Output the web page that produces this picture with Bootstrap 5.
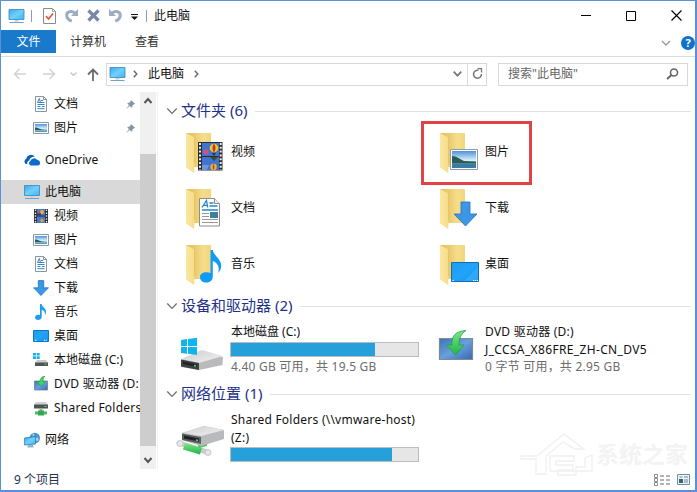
<!DOCTYPE html>
<html lang="zh-CN">
<head>
<meta charset="utf-8">
<meta name="viewport" content="width=device-width, initial-scale=1">
<title>此电脑</title>
<link href="https://cdn.jsdelivr.net/npm/bootstrap@5.3.0/dist/css/bootstrap.min.css" rel="stylesheet">
<style>
body{font-family:"Noto Sans","Noto Sans CJK SC",sans-serif;font-size:12px;line-height:17.5px;color:#111;background:#fff}
svg{display:block;flex-shrink:0}
.win{width:697px;height:492px;border:1px solid #5a90d8;border-width:1px 2px 2px 1px}
.titlebar{height:29px;padding-left:7px}
.ml-2x{margin-left:2px}.ml-5x{margin-left:5px}.ml-6x{margin-left:6px}.ml-7x{margin-left:7px}.ml-9x{margin-left:9px}
.ml-10x{margin-left:10px}.ml-11x{margin-left:11px}.ml-13x{margin-left:13px}.ml-14x{margin-left:14px}.ml-16x{margin-left:16px}
.ml-29x{margin-left:29px}.ml-34x{margin-left:34px}
.qat-drop{margin:4px 0 0 9px}
.btn-x{margin:0 13px 0 35px}
.help{margin:6px 0 0 10px}
.refresh{margin:0 3px 0 4px}
.tabs{height:27px;border-bottom:1px solid #dcdcdc}
.tab-file{width:55px;height:23px;background:#1979ca;color:#fff;line-height:23px}
.tab-item{line-height:23px;color:#333}
.addr{height:34px;padding-left:12px}
.box{height:23px;border:1px solid #d9d9d9}
.addr-box{width:381px}
.search-box{width:190px;margin-left:11px;color:#666;padding:0 8px 0 9px}
.work{padding-top:1px;height:378px}
.side{width:139px}
.side-row{height:24px;padding-left:32px;gap:5px}
.side-row.top-level{padding-left:23px}
.side-row.sel{background:#d9d9d9}
.scroller{width:16px;background:#f0f0f0;height:377px}
.thumb{background:#cdcdcd}
.split{width:2px;margin-left:1px;border-left:1px solid #f2f2f2}
.content{padding:9px 4px 0 7px;min-width:0}
.group-head{height:20px;font-size:15px;color:#1e3287;gap:3px}
.group-line{height:1px;background:#e2e2e2;margin-left:5px}
.folders{padding-top:3px;padding-bottom:4px}
.drives{height:68px;padding-top:7px}
.tile{width:254px;padding-left:14px;gap:3px}
.tile-folder{height:56px;padding-top:4px}
.tile-folder span{padding-top:15px}
.drop-5{margin-top:5px}.drop-7{margin-top:7px}
.spaced{letter-spacing:.24px}.spaced-more{letter-spacing:.35px}
.hl{left:1px;top:-3px;width:111px;height:64px;border:3px solid #e04343}
.meter{width:189px;height:15px;border:1px solid #bcbcbc;background:#e6e6e6;border-radius:0;margin:1px 0 1px -1px}
.meter .progress-bar{background:#26a0da}
.sub{color:#6d6d6d;letter-spacing:.22px}
.status{height:21px;padding-left:13px;color:#1f3350}
.view-tiles{margin:0 5px 0 7px}
.wm{right:3px;bottom:6px;pointer-events:none}
.wm text{font-family:"Noto Sans CJK SC",sans-serif;font-weight:700}
</style>
</head>
<body>
<svg width="0" height="0" class="position-absolute">
<defs>
<linearGradient id="gS" x1="0" y1="0" x2="1" y2="1"><stop offset="0" stop-color="#3aa7ee"/><stop offset=".5" stop-color="#6fd0fb"/><stop offset="1" stop-color="#45b4f4"/></linearGradient>
<linearGradient id="gF" x1="0" y1="0" x2="1" y2="0"><stop offset="0" stop-color="#fbe7a0"/><stop offset="1" stop-color="#f6dc88"/></linearGradient>
<linearGradient id="gB" x1="0" y1="0" x2="1" y2="0"><stop offset="0" stop-color="#e3bd5c"/><stop offset=".35" stop-color="#ecca6c"/><stop offset=".7" stop-color="#f6dd8b"/><stop offset="1" stop-color="#f1d67c"/></linearGradient>
<linearGradient id="gSky" x1="0" y1="0" x2="0" y2="1"><stop offset="0" stop-color="#4e93dc"/><stop offset=".55" stop-color="#d9effa"/><stop offset="1" stop-color="#3f88b8"/></linearGradient>
<linearGradient id="gD" x1="0" y1="0" x2="1" y2="1"><stop offset="0" stop-color="#1c9cf2"/><stop offset=".5" stop-color="#22a4fa"/><stop offset="1" stop-color="#0f90ec"/></linearGradient>
<linearGradient id="gV" x1="0" y1="0" x2="1" y2="1"><stop offset="0" stop-color="#3c73b8"/><stop offset=".5" stop-color="#6a9fdc"/><stop offset="1" stop-color="#3568b0"/></linearGradient>
<linearGradient id="gT" x1="0" y1="0" x2="1" y2="1"><stop offset="0" stop-color="#cfcfd1"/><stop offset="1" stop-color="#f0f0f1"/></linearGradient>
<linearGradient id="gG" x1="0" y1="0" x2="0" y2="1"><stop offset="0" stop-color="#7fe58a"/><stop offset="1" stop-color="#1fb544"/></linearGradient>
<symbol id="pc" viewBox="0 0 16 16"><path d="M.5 1.500h15v10H.5z" fill="url(#gS)" stroke="#3b86b8" stroke-width=".8"/><path d="M6 12h4v1.600H6z" fill="#b9d3e3"/><path d="M1 14.500h14" stroke="#6da4c6"/></symbol>
<symbol id="doc" viewBox="0 0 16 16"><path d="M2.500.5h8l3 3v12h-11z" fill="#fff" stroke="#8d969c"/><path d="M10.500.5v3h3" fill="none" stroke="#8d969c"/><path d="M4.500 6.500 6.300 2.500 7.500 6.500M8 4.500h2M4.500 6.500h7M4.500 8.500h7M4.500 10.500h3M9 10.500h2.500M4.500 12.700h7" fill="none" stroke="#2e86c4"/></symbol>
<symbol id="pic" viewBox="0 0 16 16"><path d="M.5 2.500h15v11H.5z" fill="#fff" stroke="#8c98a3"/><path d="M2 4h12v8H2z" fill="url(#gSky)"/><path d="M2 7.500c3 0 4 1.500 8 2.200l4 .3H2z" fill="#2f5d52"/></symbol>
<symbol id="film" viewBox="0 0 16 16"><path d="M1 1h14v14H1z" fill="#2a2a2e"/><path d="M4 1h8v6.500H4zM4 8.500h8V15H4z" fill="#4a7ad0"/><path d="M2.500 1.500v13M13.500 1.500v13" stroke="#e8e8e8" stroke-width="1.400" stroke-dasharray="1.500 1.400"/><circle cx="9" cy="4" r="1.900" fill="#e8b62a"/><path d="M4 5.500h4v2H4z" fill="#333a68"/><circle cx="6" cy="4" r="1" fill="#d8465f"/><circle cx="9" cy="12.500" r="1.700" fill="#d9a32d"/></symbol>
<symbol id="down" viewBox="0 0 16 16"><path d="M5.300.6h5.400v7.200h4.700L8 15.500.6 7.800h4.700z" fill="#3c97e6" stroke="#2472be" stroke-width=".8"/></symbol>
<symbol id="note" viewBox="0 0 16 16"><path d="M7 0h1.500c.5 3 4.700 4 4.500 8-.1 1.500-.6 2.500-1.200 3 .7-3-1-4.800-3.100-5.300v7c0 4-6.700 4.300-6.700.9C2 11 5 10.300 7 11.200z" fill="#1a9cf0"/></symbol>
<symbol id="desk" viewBox="0 0 16 16"><path d="M.5 2.500h15v11H.5z" fill="url(#gD)" stroke="#0c78c4"/><path d="M2 12.300h2M11 12.300h3" stroke="#fff" stroke-dasharray="1 .6"/></symbol>
<symbol id="disk" viewBox="0 0 16 16"><path d="M0 1h3v2.600H0zM3.700 1h3v2.600h-3zM0 4.300h3v2.600H0zM3.700 4.300h3v2.600h-3z" fill="#13b3ea"/><path d="M4 8h9l2 3H2z" fill="#c9c9c9"/><path d="M2 10.500h13v3.500H2z" fill="#505356"/><path d="M11.500 12.200h2" stroke="#4be05c"/></symbol>
<symbol id="dvd" viewBox="0 0 16 16"><path d="M1.500 5h13v9h-13z" fill="url(#gV)" stroke="#6784a5" stroke-width=".8"/><path d="M12 0C9 .4 7 2.500 7 5.500H4l4.500 5 4-5H10C10 3 10.600 1.200 12 0z" fill="#3fd264" stroke="#1c9a3c" stroke-width=".6"/></symbol>
<symbol id="nd" viewBox="0 0 16 16"><path d="M3 2h10l2 3H1z" fill="#d0d0d0"/><path d="M1 4.500h14v4H1z" fill="#4f5254"/><path d="M11.500 6.500h2" stroke="#4be05c"/><path d="M6.500 8.500h3v3h-3z" fill="#8fb59a"/><path d="M2 11.500h12v3H2z" fill="#4fbb62"/><path d="M5 10.500h6v5H5z" fill="#35a74c"/></symbol>
<symbol id="net" viewBox="0 0 16 16"><circle cx="10.800" cy="5.500" r="5.200" fill="#4a92c8"/><path d="M8 2c2-1.500 3 0 2 1.500s1 2 3 1.500 2 3 0 4" fill="#a8d6ee"/><path d="M.6 5.500 11.500 4v7.500L.6 12.500z" fill="url(#gS)" stroke="#2d79b4" stroke-width=".8"/><path d="M4.500 12.500h4v1.500h-4zM3 14.500h7" fill="#9db" stroke="#76a2bf" stroke-width=".7"/></symbol>
<symbol id="cloud" viewBox="0 0 16 16"><path d="M1.700 11.500A3 3 0 0 1 2.300 6.300 4.700 4.700 0 0 1 10.700 4.300C7.500 4 5.600 6 5.300 8 3.400 8.200 3 10 3.400 11.500z" fill="#0a5fb8"/><path d="M6.700 13A2.300 2.300 0 0 1 6.200 8.800 4 4 0 0 1 13.300 7.500 2.800 2.800 0 0 1 14 13z" fill="#0d6cc9"/></symbol>
<symbol id="pin" viewBox="0 0 12 12"><path d="M6.500 1 11 5.200 9.800 5.700 8 7.300 7.700 9.800 5.200 7.600 1 11.200 4.300 6.700 2.300 4.300 4.800 4 6.300 2.300z" fill="#8797a6"/></symbol>
<symbol id="chev" viewBox="0 0 12 12"><path d="M1.300 3.500 6 8.300 10.700 3.500" fill="none" stroke="#6e6e6e" stroke-width="1.200"/></symbol>
<symbol id="fold" viewBox="0 0 48 48"><path d="M6 5h25v34H12z" fill="url(#gB)"/><path d="M6 5 14.500 9.500V36l-.3 9L6 39.500z" fill="url(#gF)"/><path d="M14.500 9.500V36" stroke="#e0bd63" stroke-width=".7"/></symbol>
</defs>
</svg>

<div class="win d-flex flex-column position-relative overflow-hidden">
  <header class="titlebar flex-shrink-0 d-flex align-items-center">
    <svg width="17" height="16"><use href="#pc"/></svg>
    <svg width="1" height="12" class="ml-6x"><path d="M.5 0v12" stroke="#999"/></svg>
    <svg width="13" height="16" class="ml-11x"><path d="M.5.5h9l3 3v12H.5z" fill="#fff" stroke="#8a8a8a"/><path d="M9.500.5v3h3" fill="none" stroke="#aaa"/><path d="m3 8 2.500 3L10 5.500" fill="none" stroke="#e2553c" stroke-width="1.700"/></svg>
    <svg width="14" height="14" viewBox="0 0 14 14" class="ml-9x"><path d="M10 4C5.500.8 1.300 3.500 1.800 7c.3 2.500 2.400 4.200 5 5.200" fill="none" stroke="#9dabc3" stroke-width="3"/><path d="M13 0v7H6z" fill="#9dabc3"/></svg>
    <svg width="13" height="13" class="ms-2"><path d="m1.500 1.500 10 10m0-10-10 10" stroke="#7787a5" stroke-width="3.300"/></svg>
    <svg width="14" height="14" viewBox="0 0 14 14" class="ms-2"><path d="M4 4c4.500-3.200 8.700-.5 8.200 3-.3 2.500-2.400 4.200-5 5.200" fill="none" stroke="#9dabc3" stroke-width="3"/><path d="M1 0v7h7z" fill="#9dabc3"/></svg>
    <svg width="7" height="7" class="qat-drop"><path d="M0 .5h7" stroke="#111"/><path d="M0 2.500h7L3.500 6z" fill="#111"/></svg>
    <svg width="1" height="12" class="ms-2"><path d="M.5 0v12" stroke="#999"/></svg>
    <span class="ml-7x">此电脑</span>
    <svg width="11" height="11" class="ms-auto"><path d="M0 5.500h10" stroke="#000"/></svg>
    <svg width="10" height="10" class="ml-34x"><path d="M.5.5h9v9h-9z" fill="none" stroke="#000"/></svg>
    <svg width="11" height="11" class="btn-x"><path d="m.5.5 10 10m0-10-10 10" stroke="#000" stroke-width="1.100"/></svg>
  </header>

  <nav class="tabs flex-shrink-0 d-flex align-items-start">
    <div class="tab-file text-center">文件</div>
    <div class="tab-item ml-14x">计算机</div>
    <div class="tab-item ml-29x">查看</div>
    <svg width="10" height="23" viewBox="0 0 10 23" class="ms-auto"><path d="M1 11l4 4 4-4" fill="none" stroke="#999" stroke-width="1.300"/></svg>
    <svg width="14" height="14" viewBox="0 0 14 14" class="help"><circle cx="7" cy="7" r="7" fill="#1173c6"/><text x="7" y="11" text-anchor="middle" font-size="11" font-weight="700" fill="#fff">?</text></svg>
  </nav>

  <div class="addr flex-shrink-0 d-flex align-items-center">
    <svg width="14" height="12"><path d="M13 6H1.500m5-5-5 5 5 5" fill="none" stroke="#d2d2d2" stroke-width="1.500"/></svg>
    <svg width="14" height="12" class="ml-16x"><path d="M0 6h11.500m-5-5 5 5-5 5" fill="none" stroke="#d2d2d2" stroke-width="1.500"/></svg>
    <svg width="7" height="5" class="ml-13x"><path d="m.5.5 3 3 3-3" fill="none" stroke="#c4c4c4" stroke-width="1.200"/></svg>
    <svg width="12" height="13" class="ml-10x"><path d="M6 13V1.500m-5 5 5-5 5 5" fill="none" stroke="#6b6b6b" stroke-width="1.800"/></svg>
    <div class="box addr-box d-flex align-items-center ml-7x">
      <svg width="17" height="16" class="ml-2x"><use href="#pc"/></svg>
      <svg width="5" height="8" class="ml-7x"><path d="m.8.8 3 3.200-3 3.200" fill="none" stroke="#666" stroke-width="1.400"/></svg>
      <span class="ml-10x">此电脑</span>
      <svg width="5" height="8" class="ml-10x"><path d="m.8.8 3 3.200-3 3.200" fill="none" stroke="#666" stroke-width="1.400"/></svg>
      <svg width="9" height="6" class="ms-auto"><path d="m.7.7 3.800 4 3.800-4" fill="none" stroke="#777" stroke-width="1.700"/></svg>
      <svg width="1" height="21" class="ml-5x"><path d="M.5 0v21" stroke="#d9d9d9"/></svg>
      <svg width="11" height="12" viewBox="0 0 11 12" class="refresh"><path d="M6.500 2.300A4 4 0 1 0 9.500 6" fill="none" stroke="#777" stroke-width="1.500"/><path d="M5.500.5H9.500V4.500" fill="none" stroke="#777" stroke-width="1.300"/></svg>
    </div>
    <div class="box search-box d-flex align-items-center justify-content-between">
      <span>搜索"此电脑"</span>
      <svg width="13" height="12"><circle cx="8" cy="4.500" r="3.500" fill="none" stroke="#666" stroke-width="1.600"/><path d="M5.500 7 1 11" stroke="#666" stroke-width="2"/></svg>
    </div>
  </div>

  <div class="work flex-shrink-0 d-flex">
    <aside class="side flex-shrink-0 text-nowrap overflow-hidden">
      <div class="side-row d-flex align-items-center"><svg width="16" height="16"><use href="#doc"/></svg>文档<svg width="11" height="11" class="ms-auto me-1"><use href="#pin"/></svg></div>
      <div class="side-row d-flex align-items-center"><svg width="16" height="16"><use href="#pic"/></svg>图片<svg width="11" height="11" class="ms-auto me-1"><use href="#pin"/></svg></div>
      <div class="side-row top-level d-flex align-items-center my-2"><svg width="16" height="17"><use href="#cloud"/></svg>OneDrive</div>
      <div class="side-row top-level sel d-flex align-items-center"><svg width="16" height="16"><use href="#pc"/></svg>此电脑</div>
      <div class="side-row d-flex align-items-center"><svg width="16" height="16"><use href="#film"/></svg>视频</div>
      <div class="side-row d-flex align-items-center"><svg width="16" height="16"><use href="#pic"/></svg>图片</div>
      <div class="side-row d-flex align-items-center"><svg width="16" height="16"><use href="#doc"/></svg>文档</div>
      <div class="side-row d-flex align-items-center"><svg width="16" height="16"><use href="#down"/></svg>下载</div>
      <div class="side-row d-flex align-items-center"><svg width="16" height="16"><use href="#note"/></svg>音乐</div>
      <div class="side-row d-flex align-items-center"><svg width="16" height="16"><use href="#desk"/></svg>桌面</div>
      <div class="side-row d-flex align-items-center"><svg width="16" height="16"><use href="#disk"/></svg>本地磁盘 (C:)</div>
      <div class="side-row d-flex align-items-center"><svg width="16" height="16"><use href="#dvd"/></svg><span class="spaced">DVD 驱动器 (D:</span></div>
      <div class="side-row d-flex align-items-center"><svg width="16" height="16"><use href="#nd"/></svg><span class="spaced">Shared Folders</span></div>
      <div class="side-row top-level d-flex align-items-center mt-2"><svg width="16" height="17"><use href="#net"/></svg>网络</div>
    </aside>
    <div class="scroller flex-shrink-0 d-flex flex-column align-items-center">
      <svg width="16" height="62" viewBox="0 0 16 62"><path d="m4.500 11 3.500-4 3.500 4" fill="none" stroke="#555" stroke-width="2"/></svg>
      <div class="thumb flex-grow-1 w-100"></div>
      <svg width="16" height="23" viewBox="0 0 16 23"><path d="m4.500 12 3.500 4 3.500-4" fill="none" stroke="#555" stroke-width="2"/></svg>
    </div>
    <div class="split flex-shrink-0"></div>
    <main class="content flex-grow-1">
      <div class="group-head d-flex align-items-center"><svg width="12" height="12"><use href="#chev"/></svg><span>文件夹 (6)</span><div class="group-line flex-grow-1"></div></div>
      <div class="folders d-flex flex-wrap">
        <div class="tile tile-folder d-flex"><svg width="48" height="48"><use href="#fold"/><path d="M18 14h24.500v28.500H18z" fill="#2d2d30"/><path d="M22 15h17v13H22zM22 29h17v13H22z" fill="#3f74cf"/><path d="M20 15v27M40.700 15v27" stroke="#eee" stroke-width="2" stroke-dasharray="2 1.800"/><circle cx="34" cy="20" r="4.300" fill="#e9c92f"/><path d="M34 15.700c2 2 2 6.600 0 8.600-2-2-2-6.600 0-8.600z" fill="#c23a24"/><circle cx="26" cy="24" r="2.800" fill="#c9567f"/><path d="m32 25 2 3 2-3z" fill="#4a2a1a"/><path d="M30 29h8l-4 4z" fill="#37502f"/><circle cx="33.500" cy="39" r="3.200" fill="#efb52c"/><path d="M33.500 35.800c1.200 1.500 1.200 5 0 6.300-1.200-1.300-1.200-4.800 0-6.300z" fill="#b9402a"/><path d="M22 37h7l-2 5h-5z" fill="#6f95de"/></svg><span>视频</span></div>
        <div class="tile tile-folder d-flex position-relative"><svg width="48" height="48"><use href="#fold"/><path d="M16.500 21.500h27v20h-27z" fill="#fff" stroke="#8f9cae"/><path d="M18 23h24v17H18z" fill="url(#gSky)"/><path d="M18 28c5 0 8 3.500 12 5l12 .5v2H18z" fill="#2c5e50"/><path d="M18 35.500h24V40H18z" fill="#3a7ca8"/></svg><span>图片</span><div class="hl position-absolute"></div></div>
        <div class="tile tile-folder d-flex"><svg width="48" height="48"><use href="#fold"/><path d="M19.500 14.500h15l5 5v22.500h-20z" fill="#fff" stroke="#8d8d8d"/><path d="M34.500 14.500v5h5" fill="#eee" stroke="#8d8d8d"/><path d="m22 23.500 4.500-7 1.200 7m-4-2.200h3.500M29.500 19h4M29.500 22h8M22 26h16" fill="none" stroke="#2387c8" stroke-width="1.300"/><path d="M22 29.500h7M22 32.500h7M22 35.500h16M22 38.500h16" stroke="#999"/><path d="M30 28h8v6h-8z" fill="#3f7f9e"/></svg><span>文档</span></div>
        <div class="tile tile-folder d-flex"><svg width="48" height="48"><use href="#fold"/><path d="M27 18h9v12h7L31.500 42 20 30h7z" fill="#3c97e6" stroke="#2472be" stroke-width=".8"/></svg><span>下载</span></div>
        <div class="tile tile-folder d-flex"><svg width="48" height="48"><use href="#fold"/><path d="M30.500 10h2.300c1 6 8.700 9 8.400 16-.2 3.500-1.500 5.500-3.200 7 2.200-6-.8-10.500-5.200-12v15.500C32.800 44.500 20 44.500 20 37c0-4.500 6-6 10.500-4z" fill="#109bf5"/></svg><span>音乐</span></div>
        <div class="tile tile-folder d-flex"><svg width="48" height="48"><use href="#fold"/><path d="M17.500 22.500h27v19h-27z" fill="url(#gD)" stroke="#0c6fb4"/><path d="M30 41 44 27v14z" fill="#49b6fc" opacity=".5"/><path d="M18.500 40.500h1.500M39 40.500h5" stroke="#fff" stroke-dasharray="1.300 .7"/></svg><span>桌面</span></div>
      </div>
      <div class="group-head d-flex align-items-center"><svg width="12" height="12"><use href="#chev"/></svg><span>设备和驱动器 (2)</span><div class="group-line flex-grow-1"></div></div>
      <div class="drives d-flex">
        <div class="tile flex-shrink-0 d-flex"><svg width="48" height="48" viewBox="0 0 48 48" class="drop-7"><path d="M1 30 20 21l23 6-.5 8L19 40 1 37z" fill="#b9babc"/><path d="M1 29 22 20l21 6-24 7z" fill="url(#gT)"/><path d="M1 29.500 19 33v7L1 36.500z" fill="#3e4144"/><path d="m3 31.500 14 3v2.500l-14-3z" fill="#202224"/><path d="m14 35.500 2 .4" stroke="#55e466" stroke-width="1.500"/><path d="m1 10 6-.9V16H1zM8 9l9-1.300V16H8zM1 17h6v6.800L1 23zM8 17h9v8l-9-1.200z" fill="#10b4ee"/></svg>
          <div><div>本地磁盘 (C:)</div><div class="progress meter"><div class="progress-bar" style="width:77%"></div></div><div class="sub">4.40 GB 可用，共 19.5 GB</div></div></div>
        <div class="tile flex-shrink-0 d-flex text-nowrap"><svg width="48" height="48" viewBox="0 0 48 48"><path d="M5.500 15.500h33v21h-33z" fill="url(#gV)" stroke="#7f8b94" stroke-width="1.200"/><path d="M32 7.500C22 8 17 13 18 22h-5.500L21.500 32l8.500-10h-5c0-6 1.500-11 7-14.500z" fill="url(#gG)" stroke="#1ca243" stroke-width=".8"/></svg>
          <div><div class="spaced">DVD 驱动器 (D:)</div><div class="spaced-more">J_CCSA_X86FRE_ZH-CN_DV5</div><div class="sub">0 字节 可用，共 2.95 GB</div></div></div>
      </div>
      <div class="group-head d-flex align-items-center"><svg width="12" height="12"><use href="#chev"/></svg><span>网络位置 (1)</span><div class="group-line flex-grow-1"></div></div>
      <div class="drives d-flex">
        <div class="tile flex-shrink-0 d-flex"><svg width="48" height="48" viewBox="2 0 48 48" class="drop-5 overflow-visible"><path d="m1 27 28 9" stroke="#c9cbcc" stroke-width="5" stroke-linecap="round"/><circle cx="2" cy="27.500" r="3" fill="#e6e6e6" stroke="#bbb" stroke-width=".7"/><circle cx="30" cy="36.500" r="3" fill="#e6e6e6" stroke="#bbb" stroke-width=".7"/><path d="m7 27 17 5-2 6.500-17-5z" fill="url(#gG)"/><path d="m19 27 10-3v6l-8 2z" fill="#4dc864"/><path d="M4 17 26 10l20 4v9l-23 7L4 24z" fill="#b9babc"/><path d="M4 17 26 10l20 4-23 6z" fill="url(#gT)"/><path d="m4 17.500 19 3.500v7L4 24z" fill="#5a5d60"/><path d="m6 19.500 15 3v3l-15-3z" fill="#1f2122"/><path d="m18 24 2 .4" stroke="#55e466" stroke-width="1.500"/></svg>
          <div><div class="text-nowrap spaced">Shared Folders (\\vmware-host)<br>(Z:)</div><div class="progress meter"><div class="progress-bar" style="width:86%"></div></div></div></div>
      </div>
    </main>
  </div>

  <footer class="status flex-shrink-0 d-flex align-items-center">
    <span>9 个项目</span>
    <svg width="16" height="12" class="ms-auto"><path d="M.5.5h3v3h-3zM.5 4.500h3v3h-3zM.5 8.500h3v3h-3z" fill="#fff" stroke="#8b8b94"/><path d="M6 2h10M6 6h10M6 10h10" stroke="#666" stroke-dasharray="4 2"/></svg>
    <svg width="13" height="11" class="view-tiles"><path d="M.5.5h12v10H.5z" fill="#e9f4fb" stroke="#6d8ea5"/><path d="M2.500 3h3M7 3h4M7 6h4M7 8h4" stroke="#6c8798"/><path d="M2 5h4v4H2z" fill="#3d6075"/></svg>
  </footer>
  <svg class="wm position-absolute" width="172" height="52" viewBox="0 0 172 52"><g fill="none" stroke="#f0f0f0" stroke-width="1.300"><path d="M1 24h16l27-22 20 15h-9L43 10 26 24v18H16V27H1z"/><path d="M30 24h24v5H36v4h17v5H38v5h18v-8h9v-9l7-3v16H30z"/></g><text x="76" y="31" font-size="23" fill="#f3f3f3">系统之家</text></svg>
</div>
<script src="https://cdn.jsdelivr.net/npm/bootstrap@5.3.0/dist/js/bootstrap.bundle.min.js"></script>
</body>
</html>
